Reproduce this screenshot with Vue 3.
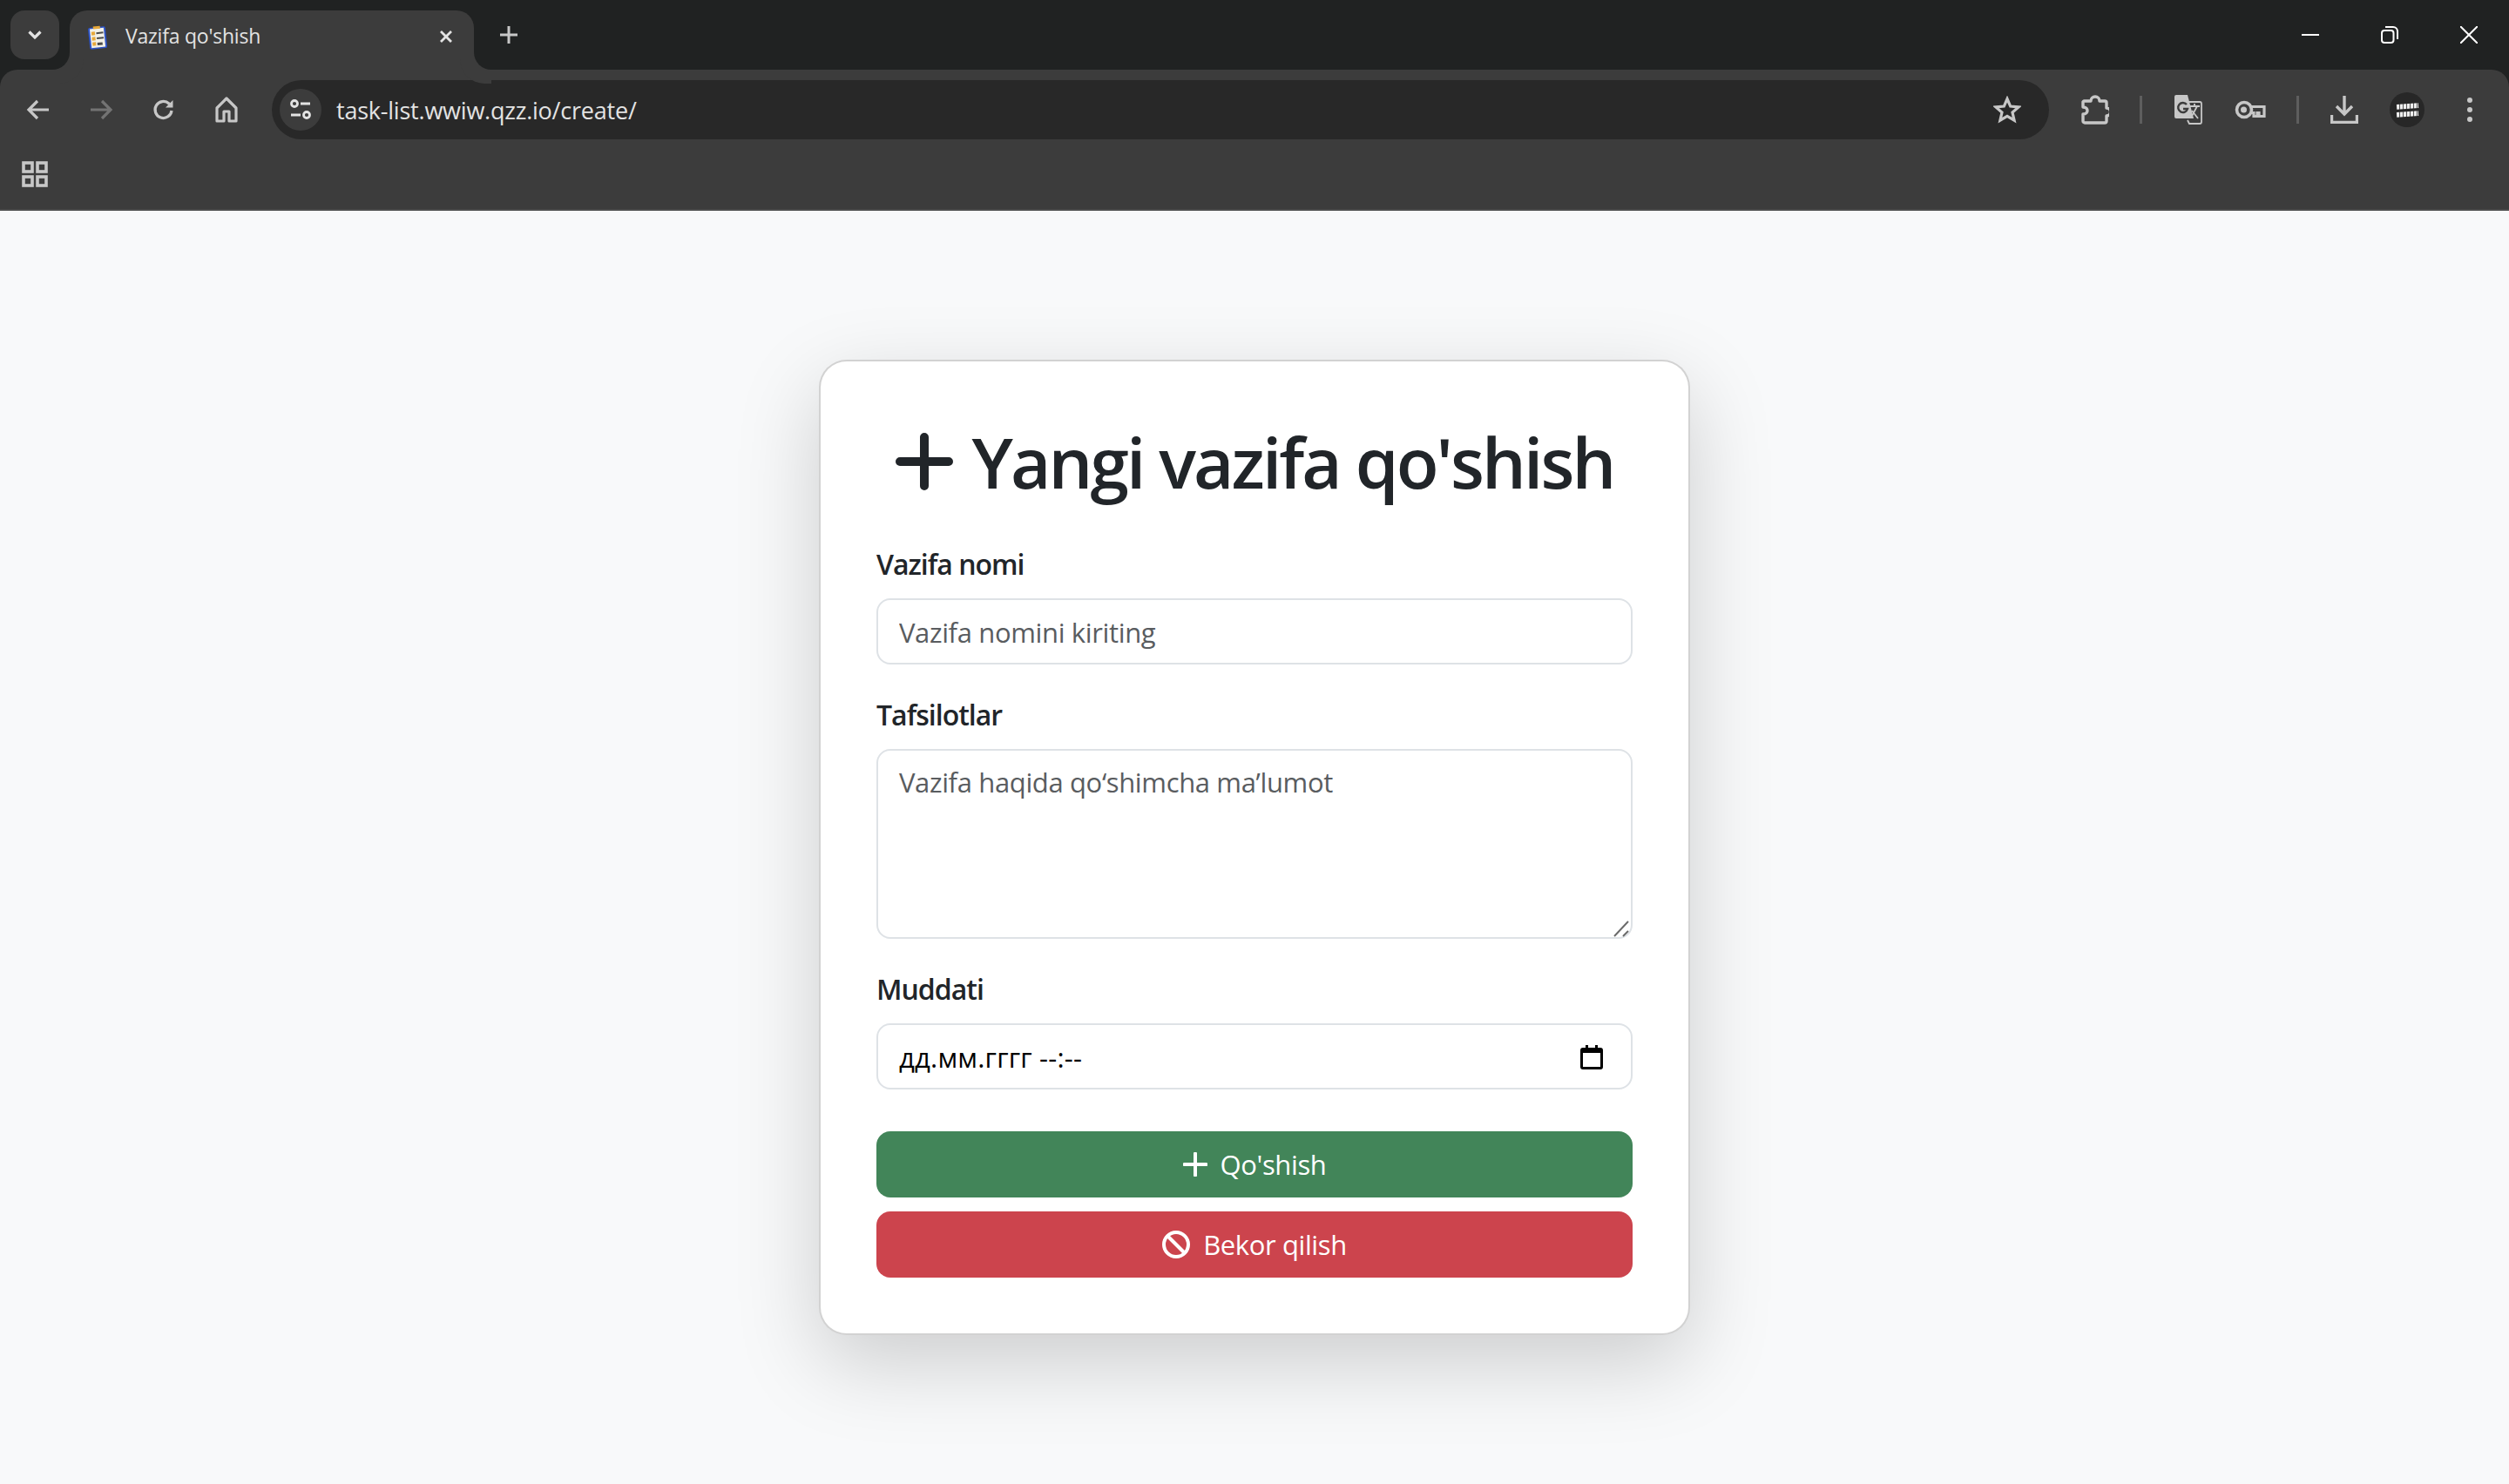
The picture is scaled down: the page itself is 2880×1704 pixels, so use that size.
<script setup>
import { ref } from 'vue'

const taskName = ref('')
const taskDetails = ref('')
</script>

<template>
  <div class="window">
    <header class="tabstrip">
      <button type="button" class="tab-search" aria-label="Search tabs">
        <svg width="20" height="20" viewBox="0 0 20 20"><path d="M3.5 6.5 10 13l6.500-6.500" fill="none" stroke="#e3e3e3" stroke-width="3.200" /></svg>
      </button>
      <div class="tab">
        <svg class="favicon" width="26" height="28" viewBox="0 0 26 28">
          <g transform="rotate(-6 13 14)">
            <rect x="3" y="2" width="20" height="25" rx="2" fill="#2f55c8" />
            <rect x="5" y="3.500" width="16" height="22" fill="#f3f1e8" />
            <rect x="9" y="1" width="8" height="3" fill="#e6a83a" />
            <rect x="6.500" y="7" width="4" height="4" fill="#e6a83a" />
            <rect x="6.500" y="13" width="4" height="4" fill="#e6a83a" />
            <rect x="6.500" y="19" width="4" height="4" fill="#e6a83a" />
            <rect x="12" y="8" width="8" height="2" fill="#4a4a4a" />
            <rect x="12" y="14" width="8" height="2" fill="#4a4a4a" />
            <rect x="12" y="20" width="6" height="3" fill="#4a4a4a" />
          </g>
        </svg>
        <span class="tab-title">Vazifa qo'shish</span>
        <svg class="tab-close" width="16" height="16" viewBox="0 0 16 16"><path d="M2 2l12 12M14 2 2 14" stroke="#e3e3e3" stroke-width="2.800" /></svg>
      </div>
      <svg class="new-tab" width="20" height="20" viewBox="0 0 20 20"><path d="M10 0v20M0 10h20" stroke="#c7c7c7" stroke-width="3" /></svg>
      <div class="window-controls">
        <svg width="20" height="20" viewBox="0 0 20 20"><path d="M0 10h20" stroke="#fff" stroke-width="2" /></svg>
        <svg width="20" height="20" viewBox="0 0 20 20"><rect x="1" y="5" width="13.500" height="14" rx="3" fill="none" stroke="#fff" stroke-width="2" /><path d="M5 1h9a5 5 0 0 1 5 5v9" fill="none" stroke="#fff" stroke-width="2" /></svg>
        <svg width="20" height="20" viewBox="0 0 20 20"><path d="M0 0l20 20M20 0 0 20" stroke="#fff" stroke-width="2" /></svg>
      </div>
    </header>

    <div class="toolbar">
      <div class="nav-row">
        <div class="nav-icons">
          <svg width="32" height="32" viewBox="0 0 32 32"><path d="M28 16H6M15 6 5 16l10 10" fill="none" stroke="#c7c7c7" stroke-width="3.200" /></svg>
          <svg width="32" height="32" viewBox="0 0 32 32"><path d="M4 16h22M17 6l10 10-10 10" fill="none" stroke="#737373" stroke-width="3.200" /></svg>
          <svg width="32" height="32" viewBox="0 0 32 32"><path d="M25 17a9.500 9.500 0 1 1-3-8l3 3" fill="none" stroke="#c7c7c7" stroke-width="3.200" /><path d="M26.500 5v8.500H18z" fill="#c7c7c7" /></svg>
          <svg width="32" height="32" viewBox="0 0 32 32"><path d="M5 14 16 3l11 11v15h-8v-11h-6v11H5z" fill="none" stroke="#c7c7c7" stroke-width="3.200" stroke-linejoin="round" /></svg>
        </div>
        <div class="omnibox">
          <span class="site-info">
            <svg width="26" height="26" viewBox="0 0 26 26">
              <circle cx="6" cy="6" r="3.500" fill="none" stroke="#e3e3e3" stroke-width="2.800" />
              <path d="M13 6h11M2 19h11" stroke="#e3e3e3" stroke-width="2.800" />
              <circle cx="20" cy="19" r="3.500" fill="none" stroke="#e3e3e3" stroke-width="2.800" />
            </svg>
          </span>
          <span class="url">task-list.wwiw.qzz.io/create/</span>
          <svg class="star" width="32" height="32" viewBox="0 0 32 32"><path d="M16 3.500l3.700 8.600 9.300.8-7 6.100 2.100 9.100-8.100-4.800-8.100 4.800 2.100-9.100-7-6.100 9.300-.8z" fill="none" stroke="#c7c7c7" stroke-width="3.200" /></svg>
        </div>
        <div class="toolbar-icons">
          <svg class="ico-ext" width="32" height="34" viewBox="0 0 32 34"><path d="M3 7h8a5 5 0 0 1 10 0h6a2 2 0 0 1 2 2v6a4.500 4.500 0 0 1 0 9v6a2 2 0 0 1-2 2H4a2 2 0 0 1-2-2v-8c4 0 5-2.500 5-4s-1-4-5-4V8z" fill="none" stroke="#c7c7c7" stroke-width="3.400" stroke-linejoin="round" /></svg>
          <i class="divider divider-a"></i>
          <svg class="ico-translate" width="34" height="34" viewBox="0 0 34 34">
            <path d="M2 2a2 2 0 0 1 2-2h13l7 27H4a2 2 0 0 1-2-2z" fill="#c7c7c7" />
            <path d="M17 8h14a2 2 0 0 1 2 2v21a2 2 0 0 1-2 2H19l-2-4" fill="none" stroke="#c7c7c7" stroke-width="1.800" />
            <path d="M16 11a5.500 5.500 0 1 0 1 5h-5" fill="none" stroke="#3c3c3c" stroke-width="2.400" />
            <path d="M19 13h12M25 10v3M21 26l7-13M22 18l7 9" fill="none" stroke="#c7c7c7" stroke-width="1.800" />
          </svg>
          <svg class="ico-key" width="36" height="22" viewBox="0 0 36 22">
            <circle cx="11" cy="11" r="8.500" fill="none" stroke="#c7c7c7" stroke-width="3.600" />
            <circle cx="10.500" cy="11" r="3.500" fill="#c7c7c7" />
            <path d="M19 7.500h15v11h-6v-4h-2v4h-4v-4h-3" fill="none" stroke="#c7c7c7" stroke-width="3.200" />
          </svg>
          <i class="divider divider-b"></i>
          <svg class="ico-download" width="32" height="32" viewBox="0 0 32 32"><path d="M16 0v21M7 12l9 9 9-9M1.500 22v8.500h29V22" fill="none" stroke="#c7c7c7" stroke-width="3.400" /></svg>
          <span class="avatar">
            <i class="avatar-band"></i>
            <i class="avatar-band"></i>
          </span>
          <svg class="ico-menu" width="8" height="30" viewBox="0 0 8 30"><circle cx="4" cy="4" r="3" fill="#c7c7c7" /><circle cx="4" cy="15" r="3" fill="#c7c7c7" /><circle cx="4" cy="26" r="3" fill="#c7c7c7" /></svg>
        </div>
      </div>
      <div class="bookmarks">
        <svg width="30" height="30" viewBox="0 0 30 30">
          <g fill="none" stroke="#c7c7c7" stroke-width="3.600">
            <rect x="2" y="2" width="10" height="10" />
            <rect x="18" y="2" width="10" height="10" />
            <rect x="2" y="18" width="10" height="10" />
            <rect x="18" y="18" width="10" height="10" />
          </g>
        </svg>
      </div>
    </div>

    <main class="page">
      <form class="card" @submit.prevent>
        <h1 class="card-title">
          <svg class="title-plus" width="66" height="66" viewBox="0 0 66 66"><path d="M33 5v56M5 33h56" stroke="#212529" stroke-width="10" stroke-linecap="round" /></svg>
          Yangi vazifa qo'shish
        </h1>

        <label class="field">
          <span class="field-label">Vazifa nomi</span>
          <input v-model="taskName" class="control" type="text" placeholder="Vazifa nomini kiriting">
        </label>

        <label class="field">
          <span class="field-label">Tafsilotlar</span>
          <span class="textarea-wrap">
            <textarea v-model="taskDetails" class="control control-area" placeholder="Vazifa haqida qo‘shimcha ma’lumot"></textarea>
            <svg class="grip" width="20" height="20" viewBox="0 0 20 20"><path d="M1 19 17 2M11 19l6-6" stroke="#6b6b6b" stroke-width="2" /></svg>
          </span>
        </label>

        <div class="field">
          <span class="field-label">Muddati</span>
          <div class="control control-date">
            <span class="date-mask">дд.мм.гггг --:--</span>
            <svg width="26" height="28" viewBox="0 0 26 28"><path d="M6 0h3v3h8V0h3v3h3a3 3 0 0 1 3 3v19a3 3 0 0 1-3 3H3a3 3 0 0 1-3-3V6a3 3 0 0 1 3-3h3zM3 9v16h20V9z" fill="#000" /></svg>
          </div>
        </div>

        <div class="actions">
          <button type="submit" class="btn btn-add">
            <svg width="28" height="28" viewBox="0 0 28 28"><path d="M14 1.500v25M1.500 14h25" stroke="#fff" stroke-width="4" stroke-linecap="round" /></svg>
            Qo'shish
          </button>
          <button type="button" class="btn btn-cancel">
            <svg width="32" height="32" viewBox="0 0 32 32"><circle cx="16" cy="16" r="14" fill="none" stroke="#fff" stroke-width="4" /><path d="M6 6l20 20" stroke="#fff" stroke-width="4" /></svg>
            Bekor qilish
          </button>
        </div>
      </form>
    </main>
  </div>
</template>

<style scoped>
.window {
  display: flex;
  flex-direction: column;
  height: 1704px;
  overflow: hidden;
  background: #202222;
  font-family: "Open Sans", "Liberation Sans", sans-serif;
}

.tabstrip {
  display: flex;
  align-items: flex-end;
  height: 80px;
  padding-left: 12px;
  background: #202222;
}

.tab-search {
  display: flex;
  align-items: center;
  justify-content: center;
  width: 56px;
  height: 56px;
  margin-bottom: 12px;
  padding: 0;
  border: 0;
  border-radius: 16px;
  background: #3c3c3c;
}

.tab {
  position: relative;
  display: flex;
  align-items: center;
  width: 464px;
  height: 68px;
  margin-left: 12px;
  padding-left: 19px;
  border-radius: 20px 20px 0 0;
  background: #3c3c3c;
  box-sizing: border-box;
  color: #e3e3e3;
  font-size: 23px;
  letter-spacing: -0.23px;
}

.tab::before,
.tab::after {
  content: "";
  position: absolute;
  bottom: 0;
  width: 20px;
  height: 20px;
  background: transparent;
}

.tab::before {
  left: -20px;
  border-bottom-right-radius: 20px;
  box-shadow: 8px 8px 0 8px #3c3c3c;
}

.tab::after {
  right: -20px;
  border-bottom-left-radius: 20px;
  box-shadow: -8px 8px 0 8px #3c3c3c;
}

.favicon {
  flex: none;
  margin-bottom: 6px;
}

.tab-title {
  margin-left: 19px;
  padding-bottom: 10px;
}

.tab-close {
  margin-left: auto;
  margin-right: 24px;
  margin-bottom: 8px;
}

.new-tab {
  align-self: center;
  margin-left: 30px;
}

.window-controls {
  display: flex;
  align-self: center;
  gap: 71px;
  margin-left: auto;
  padding-right: 36px;
}

.toolbar {
  height: 162px;
  border-bottom: 2px solid #4a4a4a;
  border-radius: 20px 20px 0 0;
  background: #3c3c3c;
  box-sizing: border-box;
}

.nav-row {
  display: flex;
  align-items: center;
  height: 80px;
  padding-top: 12px;
  padding-left: 28px;
  box-sizing: border-box;
}

.nav-icons {
  display: flex;
  gap: 40px;
}

.omnibox {
  display: flex;
  align-items: center;
  width: 2040px;
  height: 68px;
  margin-left: 36px;
  padding: 0 20px 0 9px;
  border-radius: 34px;
  background: #282828;
  box-sizing: border-box;
}

.site-info {
  display: flex;
  align-items: center;
  justify-content: center;
  width: 48px;
  height: 48px;
  border-radius: 50%;
  background: #3c3c3c;
}

.url {
  margin-left: 17px;
  color: #e3e3e3;
  font-size: 27px;
  letter-spacing: -0.22px;
}

.star {
  margin-left: auto;
  margin-right: 12px;
}

.toolbar-icons {
  display: flex;
  align-items: center;
  margin-left: 37px;
}

.divider {
  display: block;
  width: 3px;
  height: 32px;
  background: #5e5e5e;
}

.divider-a {
  margin-left: 35px;
}

.ico-translate {
  margin-left: 35px;
}

.ico-key {
  margin-left: 37px;
}

.divider-b {
  margin-left: 35px;
}

.ico-download {
  margin-left: 36px;
}

.avatar {
  display: flex;
  flex-direction: column;
  align-items: center;
  justify-content: center;
  gap: 3px;
  width: 40px;
  height: 40px;
  margin-left: 36px;
  border-radius: 50%;
  background: #272727;
}

.avatar-band {
  display: block;
  width: 25px;
  height: 6px;
  background: repeating-linear-gradient(90deg, #eee 0 3px, #555 3px 4px);
  transform: rotate(-4deg);
}

.ico-menu {
  margin-left: 48px;
}

.bookmarks {
  display: flex;
  align-items: center;
  height: 80px;
  padding-left: 25px;
  box-sizing: border-box;
}

.page {
  display: flex;
  flex: 1;
  align-items: center;
  justify-content: center;
  background: #f8f9fa;
}

.card {
  width: 1000px;
  padding: 64px;
  border: 2px solid rgba(0, 0, 0, 0.175);
  border-radius: 32px;
  background: #fff;
  box-shadow: 0 32px 96px rgba(0, 0, 0, 0.175);
  box-sizing: border-box;
  color: #212529;
}

.card-title {
  display: flex;
  align-items: center;
  justify-content: center;
  gap: 22px;
  height: 96px;
  margin: 0 0 56px;
  padding-top: 4px;
  box-sizing: border-box;
  font-size: 80px;
  font-weight: 600;
  letter-spacing: -2.9px;
  white-space: nowrap;
}

.title-plus {
  margin-top: 2px;
}

.field {
  display: block;
  margin-bottom: 41px;
}

.field-label {
  display: block;
  height: 48px;
  margin-bottom: 8px;
  font-size: 32px;
  font-weight: 600;
  letter-spacing: -1px;
  line-height: 34px;
}

.control {
  display: block;
  width: 100%;
  height: 76px;
  padding: 13px 24px 11px;
  border: 2px solid #dee2e6;
  border-radius: 16px;
  background: #fff;
  box-sizing: border-box;
  color: #212529;
  font-family: inherit;
  font-size: 31px;
  letter-spacing: -0.36px;
  outline: none;
}

.control::placeholder {
  color: #595c5f;
  opacity: 1;
}

.textarea-wrap {
  position: relative;
  display: block;
}

.control-area {
  height: 218px;
  padding-top: 15px;
  resize: none;
}

.grip {
  position: absolute;
  right: 2px;
  bottom: 2px;
}

.control-date {
  display: flex;
  align-items: center;
  justify-content: space-between;
  margin-bottom: 48px;
  padding-right: 32px;
  letter-spacing: 0.2px;
}

.date-mask {
  color: #000;
}

.actions {
  display: flex;
  flex-direction: column;
  gap: 16px;
}

.btn {
  display: flex;
  align-items: center;
  justify-content: center;
  gap: 15px;
  height: 76px;
  padding: 0;
  border: 0;
  border-radius: 16px;
  color: #fff;
  font-family: inherit;
  font-size: 31px;
  letter-spacing: -0.4px;
}

.btn-add {
  background: #428559;
}

.btn-cancel {
  background: #cc444d;
}
</style>

<style>
body {
  background: #f8f9fa;
}
</style>
